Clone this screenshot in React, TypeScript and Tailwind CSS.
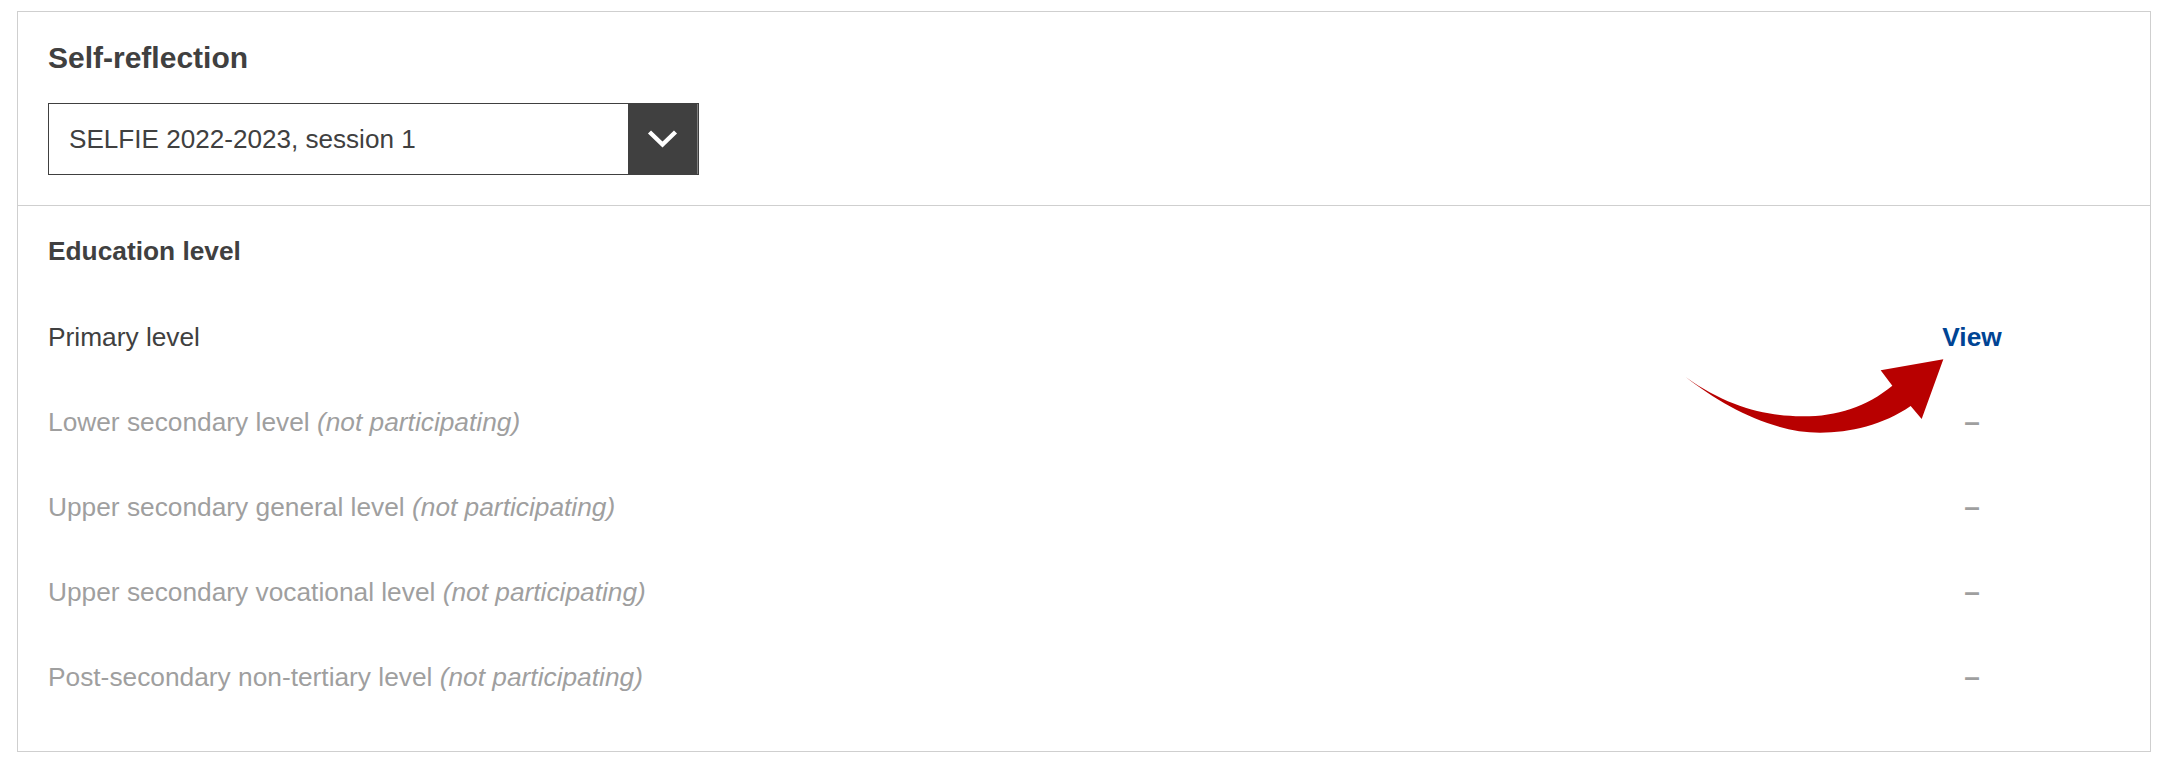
const levels = [
  { name: "Lower secondary level" },
  { name: "Upper secondary general level" },
  { name: "Upper secondary vocational level" },
  { name: "Post-secondary non-tertiary level" },
];

const Arrow = () => (
  <svg viewBox="0 0 1080 480" className="absolute left-[1642px] top-[288px] w-[360px] h-[160px]">
    <path
      fill="#b80000"
      d="M78 232 C200 320 320 350 430 349 C530 349 620 320 697 257 L662 211 L850 178 L785 357 L752 318 C670 375 570 398 480 398 C340 398 190 320 78 232 Z"
    />
  </svg>
);

export default function App() {
  return (
    <div className="bg-white h-[766px] pt-[11px] pl-[17px] pr-[15px] font-['Liberation_Sans',Arial,sans-serif] text-[26.3px] text-[#404040]">
      <div className="relative border border-[#cfcfcf] h-[741px]">
        <div className="h-[194px] border-b border-[#cfcfcf] pl-[30px] pt-[28px]">
          <h2 className="text-[30px] leading-[36px] font-bold">Self-reflection</h2>
          <div className="mt-[27px] flex w-[651px] h-[72px] border border-[#404040] text-[26.1px]">
            <div className="flex-1 flex items-center pl-[20px] pt-[1px]">SELFIE 2022-2023, session 1</div>
            <div className="w-[70px] bg-[#404040] border-r border-[#808080] flex items-center justify-center">
              <svg viewBox="0 0 30 20" className="w-[31px] h-[20px] text-white" fill="none" stroke="currentColor" strokeWidth="4.4">
                <path d="M2 3 L15 15.5 L28 3" />
              </svg>
            </div>
          </div>
        </div>
        <div className="pl-[30px] pr-[118px] pt-[29px]">
          <h3 className="font-bold leading-[32px]">Education level</h3>
          <div className="mt-[54px] flex h-[85px] justify-between">
            <span className="leading-[32px]">Primary level</span>
            <a className="w-[120px] text-center font-bold text-[#004494] leading-[32px]">View</a>
          </div>
          {levels.map((l) => (
            <div key={l.name} className="flex h-[85px] justify-between text-[#9f9f9f]">
              <span className="leading-[32px]">
                {l.name} <em className="italic">(not participating)</em>
              </span>
              <span className="w-[120px] text-center font-bold leading-[32px] text-[28px]">–</span>
            </div>
          ))}
        </div>
        <Arrow />
      </div>
    </div>
  );
}
